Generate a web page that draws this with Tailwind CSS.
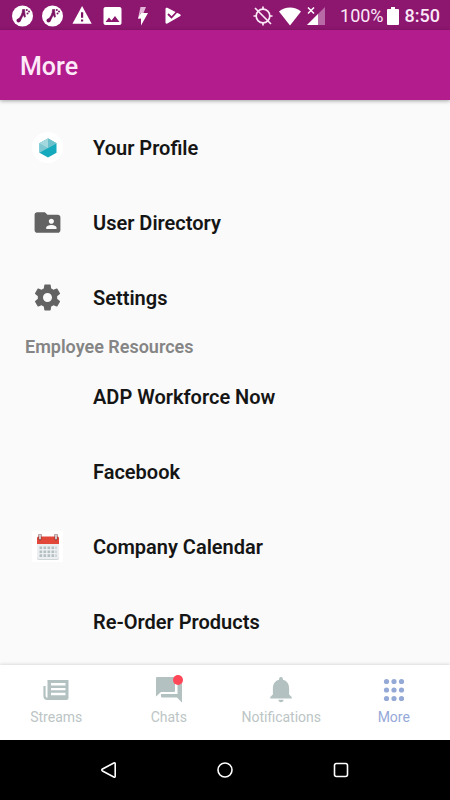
<!DOCTYPE html>
<html lang="en">
<head>
<meta charset="utf-8">
<meta name="viewport" content="width=device-width, initial-scale=1">
<title>More</title>
<script src="https://cdn.jsdelivr.net/npm/@tailwindcss/browser@4"></script>
</head>
<body class="flex min-h-screen flex-col bg-[#fafafa] font-[Roboto,sans-serif] text-[#151515]">

<!-- Status bar -->
<div class="flex h-[30px] items-center justify-between bg-[#8d166f] pl-3 pr-[10px] pt-px text-[#fbe9f7]">
  <div class="flex items-center gap-2">
    <svg class="size-[22px]" viewBox="0 0 22 22"><circle cx="10.500" cy="11" r="10.500" fill="#fff"/><path d="M10.500 4.500h2.300c-.4 3 .6 5 .6 7.500l-1 .2-1-2.400-3.400 6.700-2.500-1.500C8.500 12 10.500 9 10.500 4.500z" fill="#7a1262" stroke="#7a1262" stroke-width=".6" stroke-linejoin="round"/><circle cx="6.500" cy="15.500" r="2" fill="#7a1262"/><circle cx="14.800" cy="5" r="1" fill="#7a1262"/><circle cx="17" cy="6.500" r="1" fill="#7a1262"/><circle cx="15.500" cy="8.500" r="1" fill="#7a1262"/></svg>
    <svg class="size-[22px]" viewBox="0 0 22 22"><circle cx="10.500" cy="11" r="10.500" fill="#fff"/><path d="M10.500 4.500h2.300c-.4 3 .6 5 .6 7.500l-1 .2-1-2.400-3.400 6.700-2.500-1.500C8.500 12 10.500 9 10.500 4.500z" fill="#7a1262" stroke="#7a1262" stroke-width=".6" stroke-linejoin="round"/><circle cx="6.500" cy="15.500" r="2" fill="#7a1262"/><circle cx="14.800" cy="5" r="1" fill="#7a1262"/><circle cx="17" cy="6.500" r="1" fill="#7a1262"/><circle cx="15.500" cy="8.500" r="1" fill="#7a1262"/></svg>
    <svg class="size-[22px]" viewBox="1 1 24 24" fill="#fff"><path d="M1.500 21.500h21L12 2 1.500 21.500z"/><path d="M12 9v6M12 16.800v2.200" stroke="#7a1262" stroke-width="2.400"/></svg>
    <svg class="size-[22px]" viewBox="2 1 22 22" fill="#fff"><path d="M21 19V5c0-1.100-.9-2-2-2H5c-1.100 0-2 .9-2 2v14c0 1.100.9 2 2 2h14c1.100 0 2-.9 2-2zM8.500 13.500l2.500 3.010L14.500 12l4.500 6H5l3.500-4.500z" transform="translate(.5)"/></svg>
    <svg class="size-[22px]" viewBox="0 0 22 22"><path d="M8.500 2H14l-2.500 6h-3v5.500H6z" fill="#e3b5d8"/><path d="M11.500 8h4.500L9 20.500V13.500H6L9 8z" fill="#fff"/></svg>
    <svg class="size-[22px]" viewBox="0 0 22 22"><path d="M3.500 4c0-1 .9-1.600 1.800-1.200L18 9.200c1 .5 1 1.500 0 2L5.300 18.500c-.9.500-1.800 0-1.800-1z" fill="#fff"/><path d="M6 9l3.500 3.500 7.500-8" fill="none" stroke="#8d166f" stroke-width="1.800"/></svg>
  </div>
  <div class="flex items-center">
    <svg class="size-[22px]" viewBox="0 0 22 22" fill="none" stroke="#fbe9f7" stroke-width="1.700"><circle cx="11" cy="11" r="6.800"/><path d="M11 1.500v3M11 17.500v3M1.500 11h3M17.500 11h3M3 3l16 16"/></svg>
    <svg class="ml-1 size-[24px]" viewBox="0 0 24 24" fill="#fff"><path d="M12 21.500L1 7.500C4 4.800 8 3.500 12 3.500s8 1.300 11 4z"/></svg>
    <svg class="ml-1 size-[20px]" viewBox="0 0 20 20"><path d="M19 1v18H1z" fill="#b76aa6"/><path d="M12 8v11H1z" fill="#fff"/><path d="M2 1.500l6 6M8 1.500l-6 6" stroke="#fff" stroke-width="1.500"/></svg>
    <span class="ml-[14px] text-lg">100%</span>
    <svg class="ml-[3px] h-[18px] w-[12px]" viewBox="0 0 12 18" fill="#fff"><path d="M4 0h4v2h3q1 0 1 1v14q0 1-1 1H1q-1 0-1-1V3q0-1 1-1h3z"/></svg>
    <span class="ml-[6px] text-lg font-medium">8:50</span>
  </div>
</div>

<!-- App bar -->
<header class="flex h-[70px] items-center bg-[#b21c8c] px-5 pt-1 shadow-[0_1px_4px_rgba(0,0,0,0.35)]">
  <h1 class="text-[25px] font-medium text-[#fdeaf8]">More</h1>
</header>

<main class="flex-1 pt-[10px] text-xl font-semibold">
  <nav aria-label="More">
    <a href="#profile" class="flex h-[75px] items-center gap-[30px] pl-8">
      <span class="flex size-[31px] items-center justify-center rounded-full bg-white">
        <svg class="size-5" viewBox="0 0 20 20"><path d="M10 .5l8.500 4.800v9.400L10 19.500l-8.500-4.800V5.300z" fill="#15a9bd"/><path d="M1.500 5.300L10 .5l8.500 4.800L1.500 14.700z" fill="#7fc8d1"/><path d="M10 .5L1.500 5.300 10 10z" fill="#a4d8df"/><path d="M10 .5l8.500 4.800L10 10z" fill="#6cc0cb"/></svg>
      </span>
      Your Profile
    </a>
    <a href="#directory" class="flex h-[75px] items-center gap-[30px] pl-8">
      <svg class="size-[31px]" viewBox="0 0 24 24" fill="#636363"><path d="M20 6h-8l-2-2H4c-1.100 0-1.990.9-1.990 2L2 18c0 1.100.9 2 2 2h16c1.100 0 2-.9 2-2V8c0-1.100-.9-2-2-2zm-5 3c1.100 0 2 .9 2 2s-.9 2-2 2-2-.9-2-2 .9-2 2-2zm4 8h-8v-1c0-1.330 2.670-2 4-2s4 .67 4 2v1z"/></svg>
      User Directory
    </a>
    <a href="#settings" class="flex h-[75px] items-center gap-[30px] pl-8">
      <svg class="size-[31px]" viewBox="0 0 24 24" fill="#636363"><path d="M19.430 12.980c.04-.32.07-.64.07-.98s-.03-.66-.07-.98l2.110-1.650c.19-.15.24-.42.12-.64l-2-3.460c-.12-.22-.39-.3-.61-.22l-2.490 1c-.52-.4-1.080-.73-1.690-.98l-.38-2.650C14.460 2.180 14.250 2 14 2h-4c-.25 0-.46.18-.49.42l-.38 2.650c-.61.25-1.170.59-1.690.98l-2.490-1c-.23-.09-.49 0-.61.22l-2 3.460c-.13.22-.07.49.12.64l2.110 1.650c-.04.32-.07.65-.07.98s.03.66.07.98l-2.110 1.650c-.19.15-.24.42-.12.64l2 3.460c.12.22.39.3.61.22l2.490-1c.52.4 1.080.73 1.690.98l.38 2.650c.03.24.24.42.49.42h4c.25 0 .46-.18.49-.42l.38-2.650c.61-.25 1.170-.59 1.690-.98l2.490 1c.23.09.49 0 .61-.22l2-3.460c.12-.22.07-.49-.12-.64l-2.110-1.650zM12 15.500c-1.930 0-3.500-1.570-3.500-3.500s1.570-3.500 3.500-3.500 3.500 1.570 3.500 3.500-1.570 3.500-3.500 3.500z"/></svg>
      Settings
    </a>
  </nav>

  <h2 class="px-[25px] text-lg leading-6 text-[#858585]">Employee Resources</h2>

  <nav aria-label="Employee Resources">
    <a href="#adp" class="flex h-[75px] items-center pl-[93px]">ADP Workforce Now</a>
    <a href="#facebook" class="flex h-[75px] items-center pl-[93px]">Facebook</a>
    <a href="#calendar" class="flex h-[75px] items-center gap-[30px] pl-8">
      <span class="flex size-[31px] items-center justify-center bg-white">
        <svg class="size-[26px]" viewBox="0 0 26 26"><path d="M2 9h22v15q0 2-2 2H4q-2 0-2-2z" fill="#cfd6d8"/><path d="M2 9h22v14q0 2-2 2H4q-2 0-2-2z" fill="#eceff0"/><path d="M2 10V4q0-1.500 1.500-1.500h19Q24 2.500 24 4v6z" fill="#e2483a"/><g fill="none" stroke="#b4bfc3" stroke-width="2.600" stroke-dasharray="2.600 1.400"><path d="M4.500 13.800h17M4.500 17.700h17M4.500 21.600h17"/></g><path d="M5 1v4M21 1v4" stroke="#8e3a36" stroke-width="3" stroke-linecap="round"/><path d="M5 1v3.500M21 1v3.500" stroke="#d5dadd" stroke-width="1.800" stroke-linecap="round"/></svg>
      </span>
      Company Calendar
    </a>
    <a href="#reorder" class="flex h-[75px] items-center pl-[93px]">Re-Order Products</a>
  </nav>
</main>

<!-- Tab bar -->
<nav aria-label="Main" class="grid h-[75px] grid-cols-4 bg-white text-sm text-[#bcc5c5] shadow-[0_-1px_3px_rgba(0,0,0,0.12)]">
  <a href="#streams" class="flex flex-col items-center gap-[2px] pt-3">
    <svg class="size-[28px]" viewBox="0 0 28 28" fill="#b3c1c1"><path fill-rule="evenodd" d="M5.500 3h21v18q0 2-2 2h-17q-2 0-2-2zM9 6v2.500h14.500V6zM9 11v2.300h14.500V11zM9 15.800v2.400h14.500v-2.400z"/><path d="M2.500 9v10q0 2.900 3 2.900h3" fill="none" stroke="#b3c1c1" stroke-width="2.200"/></svg>
    Streams
  </a>
  <a href="#chats" class="flex flex-col items-center gap-[2px] pt-3">
    <span class="relative">
      <svg class="size-[28px]" viewBox="0 0 28 28" fill="#b3c1c1"><path d="M1 1q0-1 1-1h17q1 0 1 1v13q0 1-1 1H6l-5 4.500zM22.500 6H26q1 0 1 1v18.500L22 20.500H7q-1 0-1-1V17h16.500z"/></svg>
      <span class="absolute -top-[2px] right-0 size-[10px] rounded-full bg-[#ff4757]"></span>
    </span>
    Chats
  </a>
  <a href="#notifications" class="flex flex-col items-center gap-[2px] pt-3">
    <svg class="size-[28px]" viewBox="0 0 28 28" fill="#b3c1c1"><path d="M14 0c1.100 0 1.900.8 1.900 1.900v.8c3.900.9 6.200 4.200 6.200 8.300V17.500l2.600 2.600V21.500H3.300v-1.400L5.900 17.500v-6.500c0-4.100 2.300-7.400 6.200-8.300v-.8C12.100.8 12.900 0 14 0zM11.400 22.800h5.200c0 1.400-1.200 2.500-2.600 2.500s-2.600-1.100-2.600-2.500z"/></svg>
    Notifications
  </a>
  <a href="#more" aria-current="page" class="flex flex-col items-center gap-[2px] pt-3 text-[#96a9d8]">
    <svg class="size-[28px]" viewBox="0 0 28 28" fill="#94a9d6"><circle cx="6.500" cy="4.500" r="2.600"/><circle cx="14" cy="4.500" r="2.600"/><circle cx="21.500" cy="4.500" r="2.600"/><circle cx="6.500" cy="13" r="2.600"/><circle cx="14" cy="13" r="2.600"/><circle cx="21.500" cy="13" r="2.600"/><circle cx="6.500" cy="21.500" r="2.600"/><circle cx="14" cy="21.500" r="2.600"/><circle cx="21.500" cy="21.500" r="2.600"/></svg>
    More
  </a>
</nav>

<!-- System navigation -->
<div class="flex h-[60px] items-center justify-center gap-[100px] bg-black">
  <button aria-label="Back"><svg class="size-4" viewBox="0 0 16 16" fill="none" stroke="#fff" stroke-width="1.600" stroke-linejoin="round"><path d="M12.800 1q1.400-.6 1.400.8v12.400q0 1.400-1.400.8L1.500 9q-1.400-1 0-2z"/></svg></button>
  <button aria-label="Home"><svg class="size-4" viewBox="0 0 16 16" fill="none" stroke="#fff" stroke-width="1.600"><circle cx="8" cy="8" r="7"/></svg></button>
  <button aria-label="Recent apps"><svg class="size-4" viewBox="0 0 16 16" fill="none" stroke="#fff" stroke-width="1.600"><rect x="1.500" y="1.500" width="13" height="13" rx="2"/></svg></button>
</div>
</body>
</html>
